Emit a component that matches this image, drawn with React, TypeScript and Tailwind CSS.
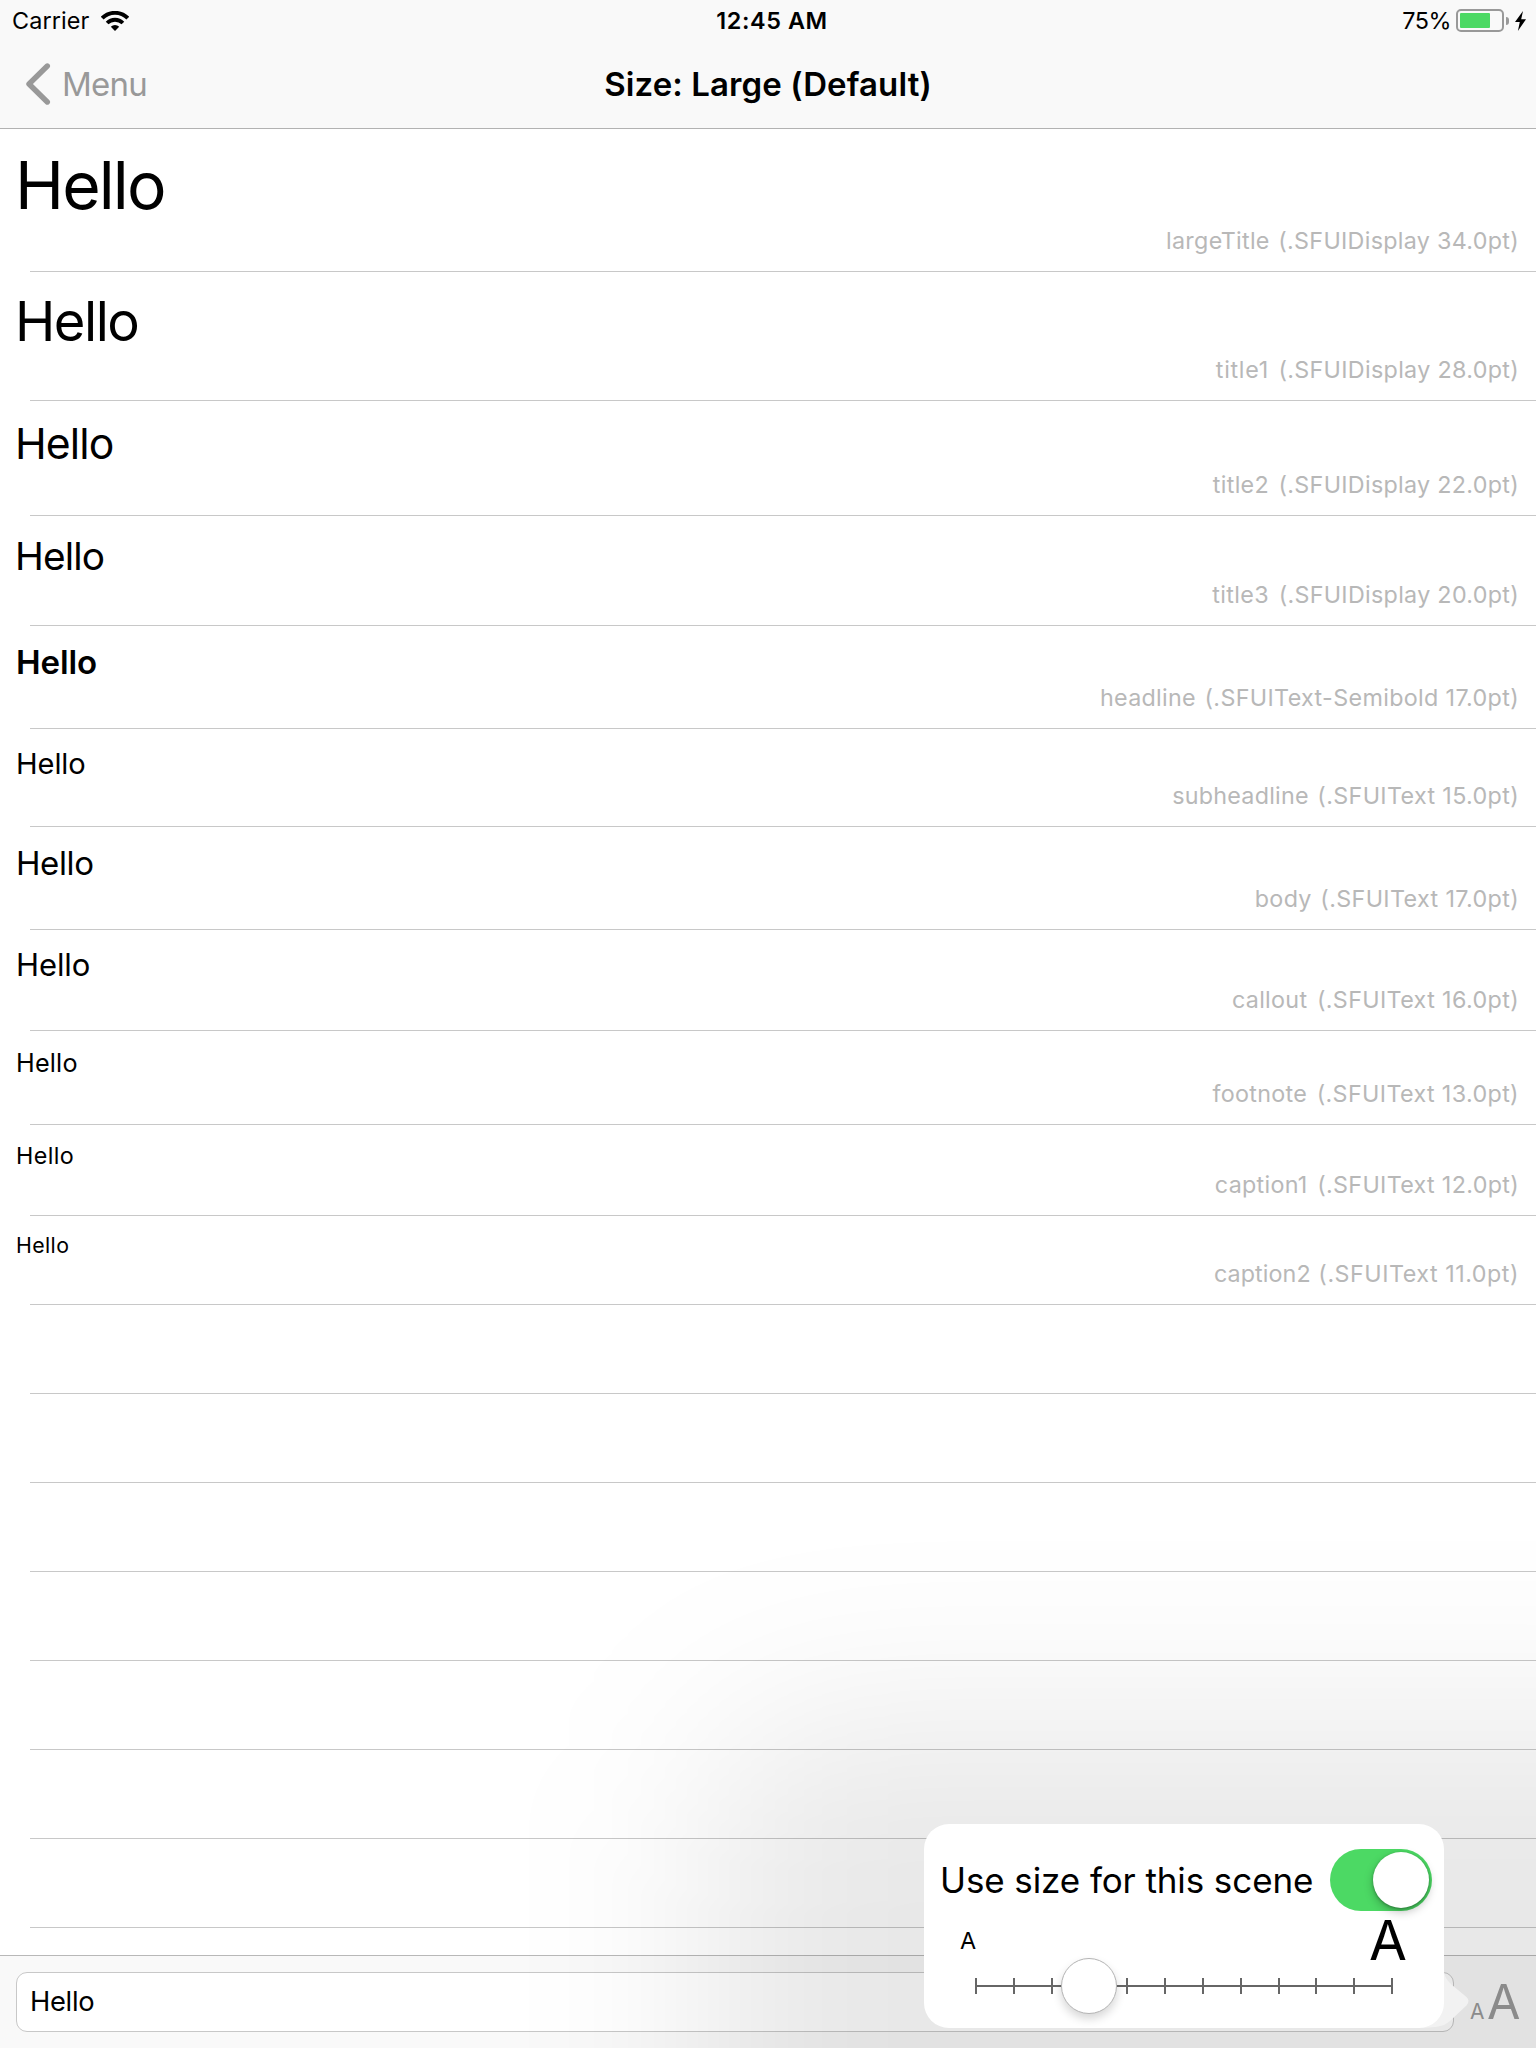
const rows = [
  { name: 'largeTitle', font: '(.SFUIDisplay 34.0pt)', row: 'h-[143px]', text: 'mt-[23px] ml-[15px] text-[66px] tracking-[-1.9px]', nameFit: 'mr-[2px] tracking-[0.3px]', fontFit: 'tracking-[0.3px]' },
  { name: 'title1', font: '(.SFUIDisplay 28.0pt)', row: 'h-[129px]', text: 'mt-[22px] ml-[15px] text-[54.3px] tracking-[-1.5px]', nameFit: 'mr-[3px] tracking-[0.7px]', fontFit: 'tracking-[0.32px]' },
  { name: 'title2', font: '(.SFUIDisplay 22.0pt)', row: 'h-[115px]', text: 'mt-[22px] ml-[15px] text-[42.7px] tracking-[-0.9px]', nameFit: 'mr-[3px] tracking-[0.3px]', fontFit: 'tracking-[0.3px]' },
  { name: 'title3', font: '(.SFUIDisplay 20.0pt)', row: 'h-[110px]', text: 'mt-[21px] ml-[15px] text-[38.8px] tracking-[-0.9px]', nameFit: 'mr-[3px] tracking-[0.4px]', fontFit: 'tracking-[0.3px]' },
  { name: 'headline', font: '(.SFUIText-Semibold 17.0pt)', row: 'h-[103px]', text: 'mt-[20px] ml-[16px] text-[33px] tracking-[-0.1px] font-semibold', nameFit: 'mr-[2px] tracking-[0.3px]', fontFit: 'tracking-[0.35px]' },
  { name: 'subheadline', font: '(.SFUIText 15.0pt)', row: 'h-[98px]', text: 'mt-[20px] ml-[16px] text-[29.1px] tracking-[-0.1px]', nameFit: 'mr-[2px] tracking-[0.25px]', fontFit: 'tracking-[0.35px]' },
  { name: 'body', font: '(.SFUIText 17.0pt)', row: 'h-[103px]', text: 'mt-[20px] ml-[16px] text-[33px] tracking-[-0.4px]', nameFit: 'mr-[2px] tracking-[0.3px]', fontFit: 'tracking-[0.37px]' },
  { name: 'callout', font: '(.SFUIText 16.0pt)', row: 'h-[101px]', text: 'mt-[19px] ml-[16px] text-[31px] tracking-[-0.1px]', nameFit: 'mr-[3px] tracking-[0.3px]', fontFit: 'tracking-[0.37px]' },
  { name: 'footnote', font: '(.SFUIText 13.0pt)', row: 'h-[94px]', text: 'mt-[20px] ml-[16px] text-[25.2px] tracking-[0.2px]', nameFit: 'mr-[3px] tracking-[0.3px]', fontFit: 'tracking-[0.37px]' },
  { name: 'caption1', font: '(.SFUIText 12.0pt)', row: 'h-[91px]', text: 'mt-[19px] ml-[16px] text-[23.3px] tracking-[0.4px]', nameFit: 'mr-[3px] tracking-[0.3px]', fontFit: 'tracking-[0.32px]' },
  { name: 'caption2', font: '(.SFUIText 11.0pt)', row: 'h-[89px]', text: 'mt-[19px] ml-[16px] text-[21.3px] tracking-[0.4px]', nameFit: 'mr-[1px] tracking-[0.1px]', fontFit: 'tracking-[0.52px]' },
];

const emptyRows = [0, 1, 2, 3, 4, 5, 6];
const ticks = [0, 1, 2, 3, 4, 5, 6, 7, 8, 9, 10, 11];

function Separator() {
  return <div className="ml-[30px] h-px shrink-0 bg-[#c8c8c8]" />;
}

function WifiIcon() {
  return (
    <svg width="28" height="20" viewBox="0 0 28 20" fill="none" stroke="#000">
      <path d="M1.2 7.1 A18.2 18.2 0 0 1 26.8 7.1" strokeWidth="4" />
      <path d="M6.1 12 A11.2 11.2 0 0 1 21.9 12" strokeWidth="3.8" />
      <path d="M14 20 L9.8 15.8 A6 6 0 0 1 18.2 15.8 Z" fill="#000" stroke="none" />
    </svg>
  );
}

function Battery() {
  return (
    <div className="flex items-center">
      <div className="h-[23px] w-[48px] rounded-[5px] border-2 border-[#999] p-[2px]">
        <div className="h-[15px] w-[30px] rounded-[1px] bg-[#4cd964]" />
      </div>
      <div className="ml-[2px] h-[8px] w-[3px] rounded-r-full bg-[#999]" />
      <svg className="ml-[6px]" width="11" height="20" viewBox="0 0 11 20">
        <path d="M8 0 L0 11 L4.8 11 L2.9 20 L11 8.3 L6.2 8.3 Z" fill="#000" />
      </svg>
    </div>
  );
}

function Header() {
  return (
    <header className="flex h-[129px] shrink-0 flex-col border-b border-[#b2b2b2] bg-[#f9f9f9]">
      <div className="grid h-[41px] grid-cols-3 items-center text-[23.4px] leading-[41px]">
        <div className="flex items-center pl-[12px]">
          <span className="w-[89px] tracking-[0.1px]">Carrier</span>
          <WifiIcon />
        </div>
        <div className="pl-[8px] text-center font-semibold tracking-[0.6px]">12:45 AM</div>
        <div className="flex items-center justify-end pr-[10px]">
          <span className="mr-[5px] tracking-[-0.5px]">75%</span>
          <Battery />
        </div>
      </div>
      <div className="grid h-[87px] grid-cols-3 items-center text-[33px] leading-[87px]">
        <div className="flex items-center pl-[25px] text-[#999]">
          <svg className="relative -top-px" width="26" height="44" viewBox="0 0 26 44" fill="none" stroke="#999" strokeWidth="5.4" strokeLinecap="round" strokeLinejoin="round">
            <path d="M22.3 4 L4 22 L22.3 40" />
          </svg>
          <span className="ml-[11px] tracking-[-0.8px]">Menu</span>
        </div>
        <div className="text-center font-semibold tracking-[0.1px] whitespace-nowrap">Size: Large (Default)</div>
        <div />
      </div>
    </header>
  );
}

function Popover() {
  return (
    <div className="absolute top-[1824px] left-[924px] h-[204px] w-[520px]">
      <div className="absolute top-[-104px] left-[-216px] h-[900px] w-[1100px] rounded-[110px] bg-black/[0.092] blur-[96px]" />
      <svg className="absolute top-[148px] left-[486px]" width="62" height="56" viewBox="0 0 62 56">
        <path d="M34 0 C35 6 38 9 42 13 L56.5 25 Q60.5 29 56.5 33.5 L40 49 C33 55 26 56 0 56 L0 0 Z" fill="#f2f2f2" />
      </svg>
      <div className="relative flex h-[204px] w-[520px] flex-col rounded-[25px] bg-white">
        <div className="flex items-center justify-between pt-[25px] pr-[12px] pl-[16px]">
          <span className="text-[35px] leading-[62px] tracking-[-0.1px] whitespace-nowrap">Use size for this scene</span>
          <div className="flex h-[62px] w-[102px] items-center justify-end rounded-full bg-[#4cd964] pr-[3px]">
            <div className="size-[56px] rounded-full bg-white shadow-[0_4px_10px_rgba(0,0,0,0.25),0_1px_3px_rgba(0,0,0,0.3)]" />
          </div>
        </div>
        <div className="flex h-[50px] items-start justify-between pr-[37px] pl-[36px]">
          <span className="mt-[18px] text-[23.4px] leading-none">A</span>
          <span className="text-[55px] leading-[59px]">A</span>
        </div>
        <div className="mt-[-3px] flex h-[56px] items-center pl-[51px]">
          <div className="relative flex h-[16px] w-[418px] items-center justify-between">
            <div className="absolute top-[7px] left-0 h-[2px] w-full bg-[#666]" />
            {ticks.map((t) => (
              <div key={t} className="h-[16px] w-[2px] bg-[#666]" />
            ))}
            <div className="absolute top-[-20px] left-[86px] size-[56px] rounded-full border border-[#b4b4b4] bg-white shadow-[0_5px_10px_rgba(0,0,0,0.16)]" />
          </div>
        </div>
      </div>
    </div>
  );
}

export default function App() {
  return (
    <div className="relative flex h-[2048px] w-[1536px] flex-col overflow-hidden bg-white font-['Inter',sans-serif] text-black">
      <Header />
      <main className="flex h-[1826px] shrink-0 flex-col overflow-hidden">
        {rows.map((r) => (
          <div key={r.name} className={`flex shrink-0 flex-col ${r.row}`}>
            <div className={`self-start leading-none ${r.text}`}>Hello</div>
            <div className="mt-auto mr-[17px] mb-[16px] self-end text-[23.3px] leading-[28px] text-[#b8b8b8]">
              <span className={r.nameFit}>{r.name}</span> <span className={r.fontFit}>{r.font}</span>
            </div>
            <Separator />
          </div>
        ))}
        {emptyRows.map((n) => (
          <div key={n} className="flex h-[89px] shrink-0 flex-col justify-end">
            <Separator />
          </div>
        ))}
      </main>
      <footer className="flex h-[93px] shrink-0 border-t border-[#b8b8b8] bg-[#f9f9f9]">
        <div className="mt-[16px] ml-[16px] h-[60px] w-[1438px] rounded-[11px] border border-[#c8c8c8] bg-white pl-[13px] text-[27.3px] leading-[58px] tracking-[-0.3px]">
          Hello
        </div>
        <div className="ml-[16px] flex h-[80px] items-baseline text-[#999]">
          <span className="w-[17px] text-[21px]">A</span>
          <span className="text-[48.5px] leading-[92px]">A</span>
        </div>
      </footer>
      <Popover />
    </div>
  );
}
